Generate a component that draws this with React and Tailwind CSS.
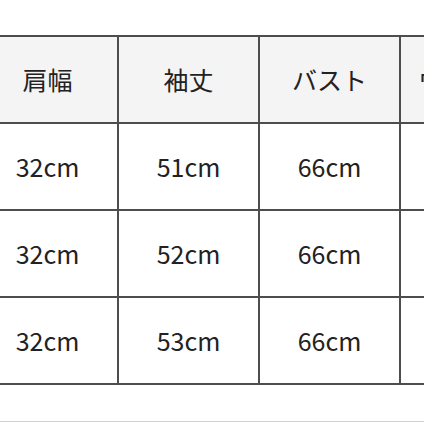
export default function App() {
  const rows = [
    ["32cm", "51cm", "66cm"],
    ["32cm", "52cm", "66cm"],
    ["32cm", "53cm", "66cm"],
  ];
  const font = { fontFamily: '"Noto Sans CJK JP", "Noto Sans", sans-serif' };
  return (
    <div className="w-[424px] h-[424px] overflow-hidden bg-white relative" style={font}>
      <div className="pt-[35px] ml-[-24px]">
        <table className="table-fixed border-collapse w-[566px] text-[25px] text-[#222]">
          <colgroup>
            <col className="w-[141px]" />
            <col className="w-[141px]" />
            <col className="w-[141px]" />
            <col className="w-[141px]" />
          </colgroup>
          <thead>
            <tr className="bg-[#f4f4f4] h-[87px]">
              <th className="border-2 border-[#4d4d4d] font-normal text-center">肩幅</th>
              <th className="border-2 border-[#4d4d4d] font-normal text-center">袖丈</th>
              <th className="border-2 border-[#4d4d4d] font-normal text-center">バスト</th>
              <th className="border-2 border-[#4d4d4d] font-normal text-left pl-[17px] whitespace-nowrap overflow-hidden">ウエスト</th>
            </tr>
          </thead>
          <tbody>
            {rows.map((r, i) => (
              <tr key={i} className="h-[87px] bg-white">
                {r.map((c, j) => (
                  <td key={j} className="border-2 border-[#4d4d4d] text-center">{c}</td>
                ))}
                <td className="border-2 border-[#4d4d4d]"></td>
              </tr>
            ))}
          </tbody>
        </table>
      </div>
      <div className="absolute left-0 right-0 top-[421px] h-[1px] bg-[#d0d0d0]"></div>
    </div>
  );
}
